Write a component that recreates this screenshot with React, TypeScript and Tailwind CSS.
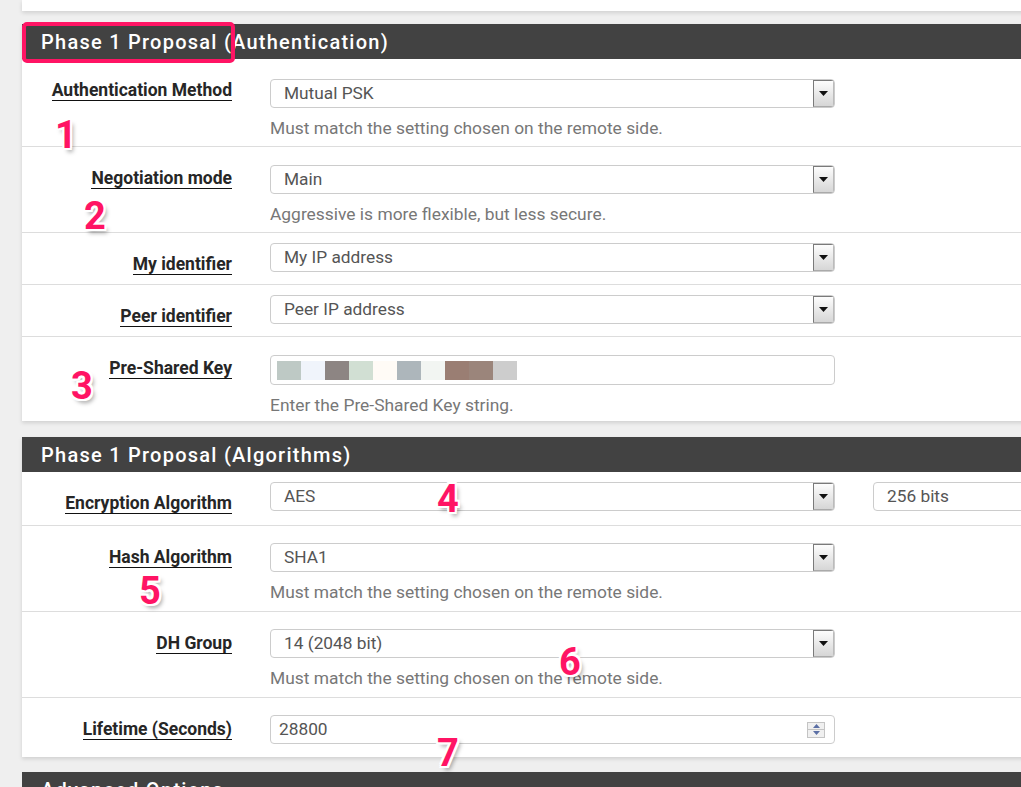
import React from 'react';

type Row = {
  label: string;
  h: string;
  pt: string;
  kind: 'select' | 'psk' | 'number' | 'enc';
  value: string;
  help?: string;
  last?: boolean;
};

const MATCH = 'Must match the setting chosen on the remote side.';

const authRows: Row[] = [
  { label: 'Authentication Method', h: 'h-[88px]', pt: 'pt-[20px]', kind: 'select', value: 'Mutual PSK', help: MATCH },
  { label: 'Negotiation mode', h: 'h-[86px]', pt: 'pt-[18px]', kind: 'select', value: 'Main', help: 'Aggressive is more flexible, but less secure.' },
  { label: 'My identifier', h: 'h-[52px]', pt: 'pt-[10px]', kind: 'select', value: 'My IP address' },
  { label: 'Peer identifier', h: 'h-[52px]', pt: 'pt-[10px]', kind: 'select', value: 'Peer IP address' },
  { label: 'Pre-Shared Key', h: 'h-[84px]', pt: 'pt-[18px]', kind: 'psk', value: '', help: 'Enter the Pre-Shared Key string.', last: true },
];

const algoRows: Row[] = [
  { label: 'Encryption Algorithm', h: 'h-[54px]', pt: 'pt-[10px]', kind: 'enc', value: 'AES' },
  { label: 'Hash Algorithm', h: 'h-[86px]', pt: 'pt-[17px]', kind: 'select', value: 'SHA1', help: MATCH },
  { label: 'DH Group', h: 'h-[86px]', pt: 'pt-[17px]', kind: 'select', value: '14 (2048 bit)', help: MATCH },
  { label: 'Lifetime (Seconds)', h: 'h-[59px]', pt: 'pt-[17px]', kind: 'number', value: '28800', last: true },
];

// blurred key, drawn as colour blocks
const pskBlocks = ['#bec9c5', '#f0f4fb', '#8d8583', '#d1dfd3', '#fffbf6', '#adb6bb', '#f2f5f2', '#9a7e73', '#9b857b', '#cdcdcd'];

const ArrowBtn = () => (
  <div className="h-[27px] w-[21px] shrink-0 border border-[#7a7a7a] border-r-[#bbb] border-b-[#aaa] bg-gradient-to-b from-[#fdfdfd] to-[#d6d6d6] flex items-center justify-center">
    <svg width="9" height="5" viewBox="0 0 9 5">
      <path d="M0 0h9L4.5 5z" fill="#111" />
    </svg>
  </div>
);

const Select = ({ value, w = 'w-[565px]' }: { value: string; w?: string }) => (
  <div className={`${w} h-[29px] border border-[#cccccc] rounded-[4px] bg-white flex items-center justify-between pl-[13px] overflow-hidden`}>
    <span className="text-[17.3px] text-[#555] leading-none">{value}</span>
    <ArrowBtn />
  </div>
);

const Control = ({ row }: { row: Row }) => {
  if (row.kind === 'psk') {
    return (
      <div className="w-[565px] h-[30px] border border-[#cccccc] rounded-[4px] bg-white flex items-center pl-[6px]">
        {pskBlocks.map((c, i) => (
          <div key={i} className="w-[24px] h-[19px]" style={{ backgroundColor: c }} />
        ))}
      </div>
    );
  }
  if (row.kind === 'number') {
    return (
      <div className="w-[565px] h-[29px] border border-[#cccccc] rounded-[4px] bg-white flex items-center justify-between pl-[8px] pr-[9px]">
        <span className="text-[17.3px] text-[#555] leading-none">{row.value}</span>
        <div className="w-[18px] h-[16px] flex flex-col border border-[#c4c4c4] bg-[#f0f0f0]">
          <div className="flex-1 flex items-center justify-center border-b border-[#c4c4c4]">
            <svg width="7" height="4" viewBox="0 0 7 4"><path d="M0 4h7L3.5 0z" fill="#5b6fa5" /></svg>
          </div>
          <div className="flex-1 flex items-center justify-center">
            <svg width="7" height="4" viewBox="0 0 7 4"><path d="M0 0h7L3.5 4z" fill="#5b6fa5" /></svg>
          </div>
        </div>
      </div>
    );
  }
  if (row.kind === 'enc') {
    return (
      <div className="flex gap-[38px]">
        <Select value={row.value} />
        <div className="w-[200px] h-[29px] border border-[#cccccc] rounded-[4px] bg-white flex items-center pl-[13px]">
          <span className="text-[17.3px] text-[#555] leading-none">256 bits</span>
        </div>
      </div>
    );
  }
  return <Select value={row.value} />;
};

const FormRow = ({ row }: { row: Row }) => (
  <div className={`${row.h} flex ${row.last ? '' : 'border-b border-[#dddddd]'}`}>
    <div className="w-[210px] shrink-0 flex justify-end pt-[21px]">
      <span className="h-[21px] text-[17.5px] leading-[20px] font-bold text-[#262626] border-b-[1.5px] border-[#111]">
        {row.label}
      </span>
    </div>
    <div className={`ml-[38px] ${row.pt}`}>
      <Control row={row} />
      {row.help && <div className="mt-[10px] text-[17.4px] leading-[20px] text-[#777]">{row.help}</div>}
    </div>
  </div>
);

const Heading = ({ title }: { title: string }) => (
  <div className="h-[35px] bg-[#424242] flex items-center pl-[19px]">
    <span className="text-white text-[20px] font-medium tracking-[1.25px] leading-none">{title}</span>
  </div>
);

const Panel = ({ title, rows }: { title: string; rows: Row[] }) => (
  <div className="bg-white shadow-[0_2px_4px_rgba(0,0,0,0.13)]">
    <Heading title={title} />
    {rows.map(r => (
      <FormRow key={r.label} row={r} />
    ))}
  </div>
);

const Mark = ({ n, pos }: { n: string; pos: string }) => (
  <div
    className={`absolute ${pos} text-[38px] leading-none font-bold text-[#ff1464] [text-shadow:-2px_-2px_0_#fff,2px_-2px_0_#fff,-2px_2px_0_#fff,2px_2px_0_#fff,0_2px_0_#fff,2px_0_0_#fff,-2px_0_0_#fff,0_-2px_0_#fff,3px_4px_4px_rgba(0,0,0,0.35)]`}
  >
    {n}
  </div>
);

export default function App() {
  return (
    <div className="relative w-[1021px] h-[787px] overflow-hidden bg-[#efefef] font-['Roboto','Liberation_Sans',sans-serif]">
      <div className="w-[1040px] ml-[22px] flex flex-col">
        <div className="h-[11px] bg-white shadow-[0_2px_4px_rgba(0,0,0,0.13)]" />
        <div className="mt-[13px]">
          <Panel title="Phase 1 Proposal (Authentication)" rows={authRows} />
        </div>
        <div className="mt-[16px]">
          <Panel title="Phase 1 Proposal (Algorithms)" rows={algoRows} />
        </div>
        <div className="mt-[15px]">
          <Heading title="Advanced Options" />
        </div>
      </div>

      {/* highlight box */}
      <div className="absolute left-[22px] top-[22px] w-[213px] h-[41px] border-[4px] border-[#ff1464] rounded-[5px]" />

      <Mark n="1" pos="left-[55px] top-[116px]" />
      <Mark n="2" pos="left-[84px] top-[197px]" />
      <Mark n="3" pos="left-[71px] top-[367px]" />
      <Mark n="4" pos="left-[437px] top-[480px]" />
      <Mark n="5" pos="left-[139px] top-[572px]" />
      <Mark n="6" pos="left-[559px] top-[643px]" />
      <Mark n="7" pos="left-[437px] top-[734px]" />
    </div>
  );
}
